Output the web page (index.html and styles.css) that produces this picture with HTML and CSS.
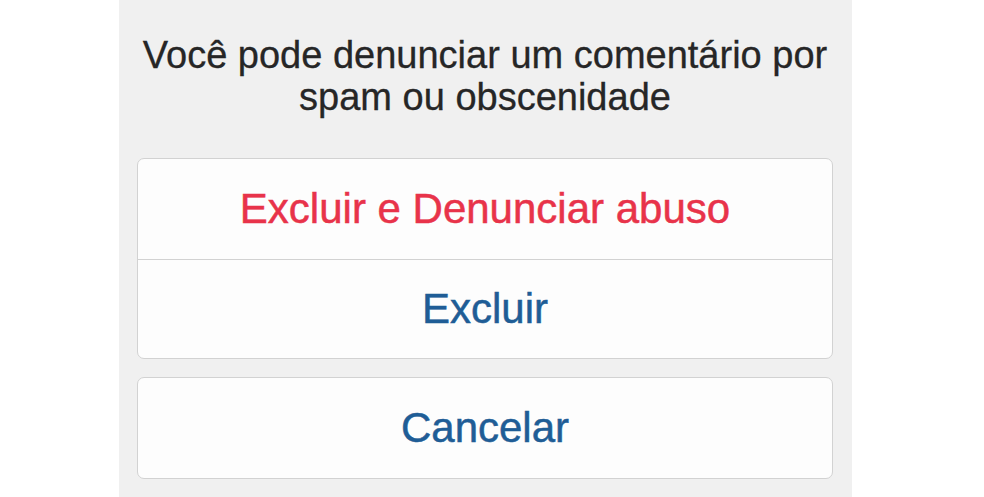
FILE: index.html
```html
<!DOCTYPE html>
<html lang="pt-BR">
<head>
<meta charset="UTF-8" />
<meta name="viewport" content="width=device-width, initial-scale=1" />
<title>Denunciar comentário</title>
<link rel="stylesheet" href="styles.css">
</head>
<body>

<section class="actionSheet">
  <p class="sheetTitle">Você pode denunciar um comentário por<br>spam ou obscenidade</p>

  <div class="sheetGroup">
    <button class="sheetButton danger">Excluir e Denunciar abuso</button>
    <button class="sheetButton">Excluir</button>
  </div>

  <div class="sheetGroup">
    <button class="sheetButton">Cancelar</button>
  </div>
</section>

</body>
</html>
```

FILE: styles.css
```css
body {
  margin: 0;
  background-color: #ffffff;
  font-family: "Liberation Sans", Arial, sans-serif;
}

.actionSheet {
  margin-left: 119px;
  width: 733px;
  height: 497px;
  background-color: #f0f0f0;
  padding: 34px 19px 0 18px;
  box-sizing: border-box;
  display: flex;
  flex-direction: column;
}

.sheetTitle {
  margin: 0 0 40px;
  font-size: 38px;
  line-height: 42px;
  text-align: center;
  color: #262626;
  -webkit-text-stroke: 0.3px currentColor;
}

.sheetGroup {
  display: flex;
  flex-direction: column;
  background-color: #fdfdfd;
  border: 1px solid #d2d2d2;
  border-radius: 7px;
  margin-bottom: 18px;
  overflow: hidden;
}

.sheetButton {
  height: 100px;
  padding: 0;
  border: none;
  background: none;
  font-family: inherit;
  font-size: 42px;
  -webkit-text-stroke: 0.5px currentColor;
  color: #1f5d96;
  cursor: pointer;
}

.sheetButton + .sheetButton {
  border-top: 1px solid #d2d2d2;
}

.danger {
  color: #e8334a;
}
```
